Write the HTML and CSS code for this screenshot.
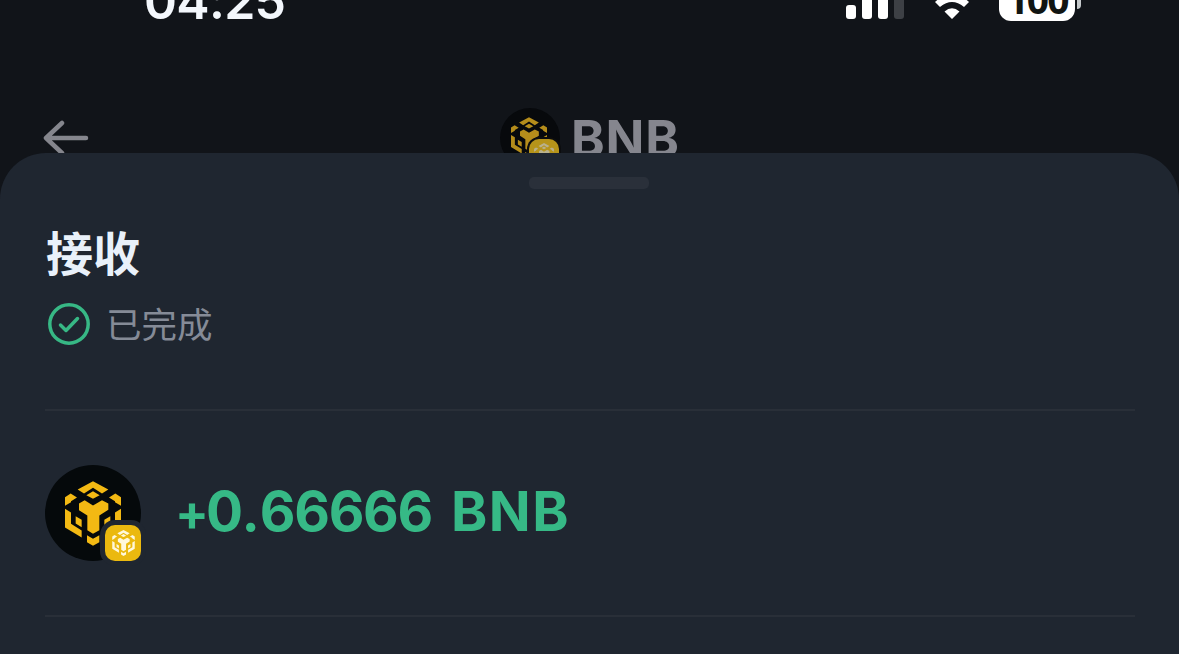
FILE: index.html
```html
<!DOCTYPE html>
<html lang="zh-CN">
<head>
<meta charset="utf-8">
<title>BNB</title>
<link rel="stylesheet" href="styles.css">
</head>
<body>
<svg class="defs" aria-hidden="true">
  <symbol id="bnb" viewBox="105 93 168 194">
    <path d="M189 93l46 25-19 12-27-17-27 17-19-12zM189 123l20 12-20 11-20-11zM122 130l19 12-18 11v3l-18 11v-26zM256 130l17 11v26l-18-11v-3l-18-11zM147 160l17-10 25 16 27-16 19 10v19l-27 17v44l-19 11-17-11v-44l-25-16zM105 176l18 11v34l32 20v21l-50-30zM273 176l-18 11v34l-32 20v21l50-30zM137 198l18 11v22l-18-11zM241 198l-18 11v22l18-11zM171 255l18 11 19-11v21l-19 11-18-11z"/>
  </symbol>
</svg>
<main class="screen">
  <div class="status">
    <span class="time">04:25</span>
    <div class="indicators">
      <svg class="signal" viewBox="0 0 60 30"><rect x="0" y="16" width="10" height="14" rx="3"/><rect x="16" y="8" width="10" height="22" rx="3"/><rect x="32" y="0" width="10" height="30" rx="3"/><rect class="off" x="48" y="-5" width="10" height="35" rx="3"/></svg>
      <svg class="wifi" viewBox="0 0 44 30"><path d="M22 29l-7.500-7.500q7.500-6.500 15 0zM5 12l5 5q12-10 24 0l5-5Q22-4 5 12z"/></svg>
      <div class="battery"><span>100</span></div>
      <i class="tip"></i>
    </div>
  </div>
  <header class="nav">
    <svg class="back" viewBox="0 0 46 40"><path d="M19 5L3 20l16 15M3 20h40"/></svg>
    <div class="token">
      <div class="coin small"><svg class="mark"><use href="#bnb"/></svg><div class="badge"><svg><use href="#bnb"/></svg></div></div>
      <span>BNB</span>
    </div>
  </header>
  <section class="sheet">
    <div class="handle"></div>
    <h1>接收</h1>
    <div class="state">
      <svg viewBox="0 0 42 42"><circle cx="21" cy="21" r="19.200"/><path d="M12.500 22l5.500 5.500L29.500 15.500"/></svg>
      <span>已完成</span>
    </div>
    <div class="amount">
      <div class="coin"><svg class="mark"><use href="#bnb"/></svg><div class="badge"><svg><use href="#bnb"/></svg></div></div>
      <strong><span class="sign">+</span><span class="lead">0.</span><span class="digits">66666</span> <span class="unit">BNB</span></strong>
    </div>
  </section>
</main>
</body>
</html>
```
FILE: styles.css
```css
* { box-sizing: border-box; }
body { margin: 0; background: #111419; font-family: Inter, "Noto Sans CJK SC", sans-serif; }
.defs { position: absolute; width: 0; height: 0; }
.screen { width: 1179px; height: 654px; overflow: hidden; display: flex; flex-direction: column; }
svg { display: block; }
.status { height: 96px; flex: none; display: flex; justify-content: space-between; padding: 0 98px 0 144px; }
.time { font-size: 50px; font-weight: 600; line-height: 60px; margin-top: -29px; color: #f3f7fc; height: 60px; letter-spacing: -.7px; }
.indicators { display: flex; align-items: flex-start; fill: #fff; }
.signal { width: 60px; height: 30px; margin: -11px 24px 0 0; overflow: visible; }
.off { fill: #3d4045; }
.wifi { width: 44px; height: 30px; margin: -10px 25px 0 0; }
.battery { width: 76px; height: 38px; margin-top: -17px; border-radius: 12px; background: #fff; color: #111512; font-family: "Open Sans", sans-serif; font-weight: 700; font-size: 39px; line-height: 31px; text-align: center; letter-spacing: -2px; }
.tip { width: 4px; height: 13px; margin: -4px 0 0 2px; background: #c6cacc; border-radius: 0 7px 7px 0; }
.nav { height: 84px; flex: none; padding-left: 43px; display: grid; grid-template-columns: 457px auto 1fr; align-items: center; }
.back { width: 46px; height: 40px; fill: none; stroke: #85868d; stroke-width: 4.500; stroke-linecap: round; stroke-linejoin: round; }
.token { display: flex; align-items: center; gap: 11px; color: #85868e; font-size: 51px; font-weight: 700; line-height: 60px; }
.token span { padding-top: 1px; letter-spacing: .8px; }
.coin { position: relative; width: 96px; height: 96px; flex: none; border-radius: 50%; background: #05090b; }
.mark { position: absolute; left: 20px; top: 16px; width: 56px; height: 65px; fill: #f3b913; }
.badge { position: absolute; right: 0; bottom: 0; width: 36px; height: 36px; border-radius: 10px; background: #ebb90f; box-shadow: 0 0 0 5px #1f2630; display: grid; place-items: center; }
.badge svg { width: 23px; height: 26px; fill: #fff8dc; }
.small { width: 60px; height: 60px; background: #07090c; }
.small .mark { left: 11px; top: 9px; width: 36px; height: 42px; fill: #b58d1b; }
.small .badge { width: 30px; height: 30px; right: 1px; bottom: -1px; background: #b6941a; box-shadow: 0 0 0 2px #0c0d0f; }
.small .badge svg { width: 20px; height: 23px; fill: #b9b18d; }
.sheet { position: relative; flex: none; height: 501px; margin-top: -27px; padding: 24px 44px 0 45px; border-radius: 46px 46px 0 0; background: #1f2630; }
.handle { width: 120px; height: 12px; margin: 0 auto 0 484px; border-radius: 5px; background: #2a303a; }
h1 { margin: 27px 0 0 1px; font-family: "Noto Sans CJK SC", sans-serif; font-size: 47px; font-weight: 700; line-height: 70px; color: #e9f1fa; }
.state { display: flex; align-items: center; gap: 16px; height: 50px; margin: 13px 0 60px 3px; font-family: "Noto Sans CJK SC", sans-serif; font-size: 35.500px; line-height: 50px; color: #858b97; }
.state svg { width: 42px; height: 42px; fill: none; stroke: #37b885; stroke-width: 3.500; stroke-linecap: round; stroke-linejoin: round; }
.state span { margin-top: -3px; }
.amount { height: 208px; display: flex; align-items: center; gap: 34px; border-top: 2px solid #292f38; border-bottom: 2px solid #292f38; }
.amount strong { color: #36b986; font-size: 55px; font-weight: 700; line-height: 70px; white-space: nowrap; margin-top: -3px; }
.sign { font-size: 50px; letter-spacing: -3px; }
.lead { letter-spacing: 0; }
.digits { letter-spacing: -1.300px; }
.unit { letter-spacing: 1.500px; margin-left: 6px; }
```
